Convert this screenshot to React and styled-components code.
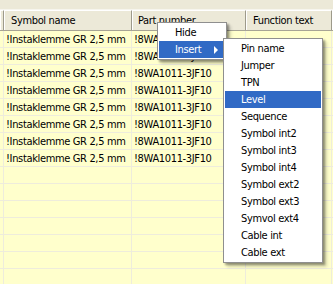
import styled, { createGlobalStyle } from 'styled-components';

const Global = createGlobalStyle`
  html, body {
    margin: 0;
    padding: 0;
    background: #ece9d8;
  }
  body {
    font-family: "DejaVu Sans Condensed", "DejaVu Sans", sans-serif;
    font-stretch: condensed;
    font-size: 11px;
    letter-spacing: -0.35px;
  }
`;

const Window = styled.div`
  position: relative;
  width: 333px;
  height: 284px;
  overflow: hidden;
  background: #ece9d8;
  display: flex;
  flex-direction: column;
`;

const TopStrip = styled.div`
  height: 9px;
  border-bottom: 1px solid #f6f5ee;
  flex-shrink: 0;
`;

const columns = '4px 128px 114px 86px 1fr';

const HeaderRow = styled.div`
  display: grid;
  grid-template-columns: ${columns};
  height: 21px;
  flex-shrink: 0;
  border-bottom: 1px solid #a7a495;
  box-sizing: border-box;
`;

const HeaderCell = styled.div`
  display: flex;
  align-items: center;
  padding-left: ${(p) => p.$pad || 0}px;
  background: #ece9d8;
  border-top: 1px solid #ffffff;
  border-left: 1px solid #ffffff;
  border-right: 1px solid #9d9a8b;
  color: #000;
  white-space: nowrap;
  overflow: hidden;
`;

const Body = styled.div`
  flex: 1;
  background: #ffffcc;
  overflow: hidden;
`;

const Row = styled.div`
  display: grid;
  grid-template-columns: ${columns};
  height: 17px;
  box-sizing: border-box;
  border-bottom: 1px solid #eeecdc;
`;

const Cell = styled.div`
  display: flex;
  align-items: center;
  padding-left: 2px;
  border-right: 1px solid #eeecdc;
  white-space: nowrap;
  overflow: hidden;
  color: #000;
`;

const Menu = styled.div`
  position: absolute;
  left: ${(p) => p.$x}px;
  top: ${(p) => p.$y}px;
  width: ${(p) => p.$w}px;
  box-sizing: border-box;
  padding: 1px;
  background: #ffffff;
  border: 1px solid #8f8f8f;
  box-shadow: 2px 2px 2px rgba(0, 0, 0, 0.35), 4px 4px 3px rgba(0, 0, 0, 0.15);
`;

const Item = styled.div`
  position: relative;
  height: 17px;
  display: flex;
  align-items: center;
  padding-left: ${(p) => p.$indent}px;
  background: ${(p) => (p.$active ? '#316ac5' : 'transparent')};
  color: ${(p) => (p.$active ? '#ffffff' : '#000000')};
  white-space: nowrap;
`;

const Arrow = styled.span`
  position: absolute;
  right: 7px;
  top: 5px;
  width: 0;
  height: 0;
  border-top: 4px solid transparent;
  border-bottom: 4px solid transparent;
  border-left: 4px solid #ffffff;
`;

const rows = Array.from({ length: 15 }, (_, i) =>
  i < 8 ? ['!Instaklemme GR 2,5 mm', '!8WA1011-3JF10', ''] : ['', '', '']
);

const subItems = [
  'Pin name',
  'Jumper',
  'TPN',
  'Level',
  'Sequence',
  'Symbol int2',
  'Symbol int3',
  'Symbol int4',
  'Symbol ext2',
  'Symbol ext3',
  'Symvol ext4',
  'Cable int',
  'Cable ext',
];

export default function App() {
  return (
    <>
      <Global />
      <Window>
        <TopStrip />
        <HeaderRow>
          <HeaderCell />
          <HeaderCell $pad={6}>Symbol name</HeaderCell>
          <HeaderCell $pad={5}>Part number</HeaderCell>
          <HeaderCell $pad={6}>Function text</HeaderCell>
          <HeaderCell />
        </HeaderRow>
        <Body>
          {rows.map((r, i) => (
            <Row key={i}>
              <Cell />
              <Cell>{r[0]}</Cell>
              <Cell>{r[1]}</Cell>
              <Cell>{r[2]}</Cell>
              <Cell />
            </Row>
          ))}
        </Body>

        <Menu $x={157} $y={22} $w={70}>
          <Item $indent={16}>Hide</Item>
          <Item $indent={16} $active>
            Insert
            <Arrow />
          </Item>
        </Menu>

        <Menu $x={223} $y={38} $w={100}>
          {subItems.map((s) => (
            <Item key={s} $indent={16} $active={s === 'Level'}>
              {s}
            </Item>
          ))}
        </Menu>
      </Window>
    </>
  );
}
